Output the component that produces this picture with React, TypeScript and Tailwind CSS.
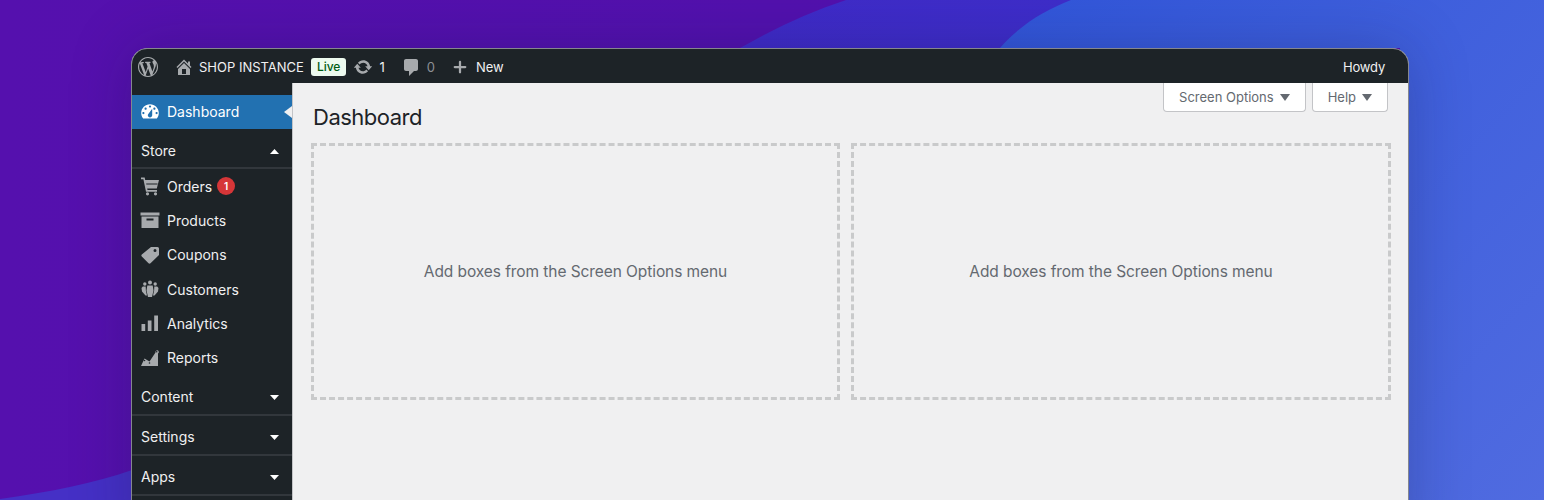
import { Plus } from "lucide-react";

const Caret = ({ up, className }: { up?: boolean; className: string }) => (
    <svg viewBox="0 0 10 6" preserveAspectRatio="none" className={className} aria-hidden="true">
        <path d={up ? "M5 0l5 6H0z" : "M0 0h10L5 6z"} fill="currentColor" />
    </svg>
);

const WpLogo = () => (
    <svg viewBox="0 0 20 20" className="w-[20px] h-[20px] text-[#a7aaad]" fill="currentColor">
        <path d="M20 10c0-5.510-4.490-10-10-10C4.480 0 0 4.490 0 10c0 5.520 4.480 10 10 10 5.510 0 10-4.480 10-10zM7.780 15.370L4.370 6.220c.55-.02 1.170-.08 1.170-.08.50-.06.44-1.130-.06-1.110 0 0-1.450.11-2.370.11-.18 0-.37 0-.58-.01C4.120 2.690 6.890 1.050 10 1.050c2.340 0 4.450.90 6.040 2.360-.67-.10-1.620.39-1.620 1.530 0 .71.43 1.310.87 2.030.35.61.55 1.360.55 2.460 0 1.490-1.400 5-1.400 5l-3.030-8.370c.54-.02.82-.17.82-.17.50-.05.44-1.250-.06-1.220 0 0-1.440.12-2.380.12-.87 0-2.330-.12-2.330-.12-.50-.03-.56 1.200-.06 1.220l.92.08 1.260 3.410zM17.410 10c.24-.64.74-1.870.43-4.250.70 1.290 1.050 2.710 1.050 4.250 0 3.290-1.730 6.240-4.480 7.820.50-1.330 1-2.670 1.500-4.010zM6.100 18.090C3.120 16.650 1.110 13.530 1.110 10c0-1.300.23-2.480.72-3.590C3.250 10.300 4.670 14.200 6.100 18.090zm4.030-6.630l2.580 6.980c-.85.310-1.780.47-2.710.47-.78 0-1.570-.11-2.290-.32 .82-2.380 1.620-4.750 2.420-7.130z" />
    </svg>
);

const HomeIcon = () => (
    <svg viewBox="0 0 20 20" className="w-[20px] h-[20px] text-[#a7aaad]" fill="currentColor">
        <path d="M16 8.500l1.530 1.530-1.060 1.060L10 4.620l-6.470 6.470-1.060-1.060L10 2.500l4 4v-2h2v4zm-6-2.460l6 5.990V18H4v-5.970zM12 17v-5H8v5h4z" />
    </svg>
);

const UpdateIcon = () => (
    <svg viewBox="0 0 20 20" className="w-[20px] h-[20px] text-[#a7aaad]" fill="currentColor">
        <path d="M10.200 3.280c3.530 0 6.430 2.610 6.920 6h2.080l-3.500 4-3.500-4h2.320c-.45-1.970-2.210-3.450-4.320-3.450-1.450 0-2.730.71-3.540 1.780L4.950 5.660C6.230 4.200 8.110 3.280 10.200 3.280zm-.400 13.440c-3.520 0-6.430-2.610-6.920-6H.800l3.500-4c1.170 1.330 2.330 2.670 3.500 4H5.480c.45 1.970 2.210 3.450 4.320 3.450 1.450 0 2.730-.71 3.540-1.780l1.710 1.950c-1.280 1.460-3.150 2.380-5.250 2.380z" />
    </svg>
);

const CommentIcon = () => (
    <svg viewBox="0 0 20 20" className="w-[20px] h-[20px] text-[#a7aaad]" fill="currentColor">
        <path d="M5 2h10c1.100 0 2 .9 2 2v8c0 1.100-.9 2-2 2h-2l-5 5v-5H5c-1.100 0-2-.9-2-2V4c0-1.100.9-2 2-2z" />
    </svg>
);

const DashIcon = () => (
    <svg viewBox="0 0 20 20" className="w-[22px] h-[22px] text-white" fill="currentColor">
        <path d="M3.760 16h12.480c1.100-1.430 1.760-3.140 1.760-5 0-4.420-3.580-8-8-8s-8 3.580-8 8c0 1.860.66 3.570 1.760 5zM10 4c.55 0 1 .45 1 1s-.45 1-1 1-1-.45-1-1 .45-1 1-1zM6 6c.55 0 1 .45 1 1s-.45 1-1 1-1-.45-1-1 .45-1 1-1zm8 0c.55 0 1 .45 1 1s-.45 1-1 1-1-.45-1-1 .45-1 1-1zm-5.370 5.550L12 7v6c0 1.100-.9 2-2 2s-2-.9-2-2c0-.57.24-1.080.63-1.450zM4 10c.55 0 1 .45 1 1s-.45 1-1 1-1-.45-1-1 .45-1 1-1zm12 0c.55 0 1 .45 1 1s-.45 1-1 1-1-.45-1-1 .45-1 1-1z" />
    </svg>
);

const icons: Record<string, React.ReactNode> = {
    Orders: (
        <path
            fillRule="evenodd"
            d="M1 1.500h3.700L5.200 4H19l-2.200 8.500H7.200l.3 1.500H17v1.700H6L3.400 3.200H1zM6.200 7.600l.1.800h11.100l.2-.8zM7.500 16.200a1.600 1.600 0 1 1 0 3.200 1.600 1.600 0 0 1 0-3.200zm8 0a1.600 1.600 0 1 1 0 3.200 1.600 1.600 0 0 1 0-3.200z"
        />
    ),
    Products: (
        <path
            fillRule="evenodd"
            d="M.5 2.500h19v3H.5zM1.500 6.500h17v11.500h-17zM6.500 8.500v2h7v-2z"
        />
    ),
    Coupons: (
        <path
            fillRule="evenodd"
            d="M11 2h6.500A1.500 1.500 0 0 1 19 3.500V10l-8.500 8.200a1.500 1.500 0 0 1-2 0l-6.700-6.700a1.500 1.500 0 0 1 0-2zM15 4a1.500 1.500 0 1 0 0 3 1.500 1.500 0 0 0 0-3z"
        />
    ),
    Customers: (
        <>
            <circle cx="10" cy="3.600" r="2" />
            <circle cx="4.800" cy="5" r="1.700" />
            <circle cx="15.200" cy="5" r="1.700" />
            <path d="M7.300 6.500h5.400l.8 5-1.500 6.500H8l-1.500-6.500zM2.800 7.500h2.900l.2 4.200 1.100 4.800H5.500L2 12.500 1.500 9zM17.200 7.500h-2.900l-.2 4.200-1.100 4.800h1.500l3.500-4L18.500 9z" />
        </>
    ),
    Analytics: <path d="M1.500 11h3.700v7H1.500zM7.800 7.500h3.700V18H7.800zM14.200 2.500H18V18h-3.800z" />,
    Reports: (
        <>
            <path d="M1 18l3.500-7.500 5 3L15.500 4.500a1.700 1.700 0 1 1 2.500 1V18z" />
            <circle cx="4.500" cy="12.500" r=".8" fill="#1d2327" />
            <circle cx="9.500" cy="15" r=".8" fill="#1d2327" />
            <circle cx="16.700" cy="3.800" r=".8" fill="#1d2327" />
        </>
    ),
};

const Icon = ({ name }: { name: string }) => (
    <svg viewBox="0 0 20 20" className="w-[20px] h-[20px] text-[#a7aaad]" fill="currentColor" aria-hidden="true">
        {icons[name]}
    </svg>
);

const storeItems = ["Orders", "Products", "Coupons", "Customers", "Analytics", "Reports"];

const Group = ({ label, up }: { label: string; up?: boolean }) => (
    <div className="flex items-center justify-between h-[40px] pt-[4px] pl-[9px] pr-[13px] border-b-2 border-[#32373c]">
        <span>{label}</span>
        <Caret up={up} className="w-[9px] h-[5px] mt-[2px] text-white" />
    </div>
);

const Drop = ({ className }: { className: string }) => (
    <div
        className={`h-[257px] border-[3px] border-dashed border-[#c9cacb] flex items-center justify-center text-[#646970] text-[15.5px] tracking-[-0.08px] ${className}`}
    >
        Add boxes from the Screen Options menu
    </div>
);

export default function App() {
    return (
        <div className="w-[1544px] h-[500px] overflow-hidden relative bg-[#4e0fa9] font-['Inter','Liberation_Sans',sans-serif] text-[14px]">
            <svg viewBox="0 0 1544 500" className="absolute inset-0 w-full h-full" aria-hidden="true">
                <defs>
                    <linearGradient id="bgA" x1="0" y1="0" x2="1" y2="0">
                        <stop offset="0" stopColor="#5510ae" />
                        <stop offset="1" stopColor="#4f12ae" />
                    </linearGradient>
                    <linearGradient id="bgB" x1="0" y1="0" x2="1" y2="0">
                        <stop offset="0" stopColor="#3f2bc8" />
                        <stop offset="1" stopColor="#3c30cc" />
                    </linearGradient>
                    <linearGradient id="bgC" gradientUnits="userSpaceOnUse" x1="1000" y1="0" x2="1544" y2="500">
                        <stop offset="0" stopColor="#3156da" />
                        <stop offset="1" stopColor="#506be0" />
                    </linearGradient>
                </defs>
                <rect width="1544" height="500" fill="url(#bgA)" />
                <path d="M740 48C775 28 810 12 846 0H1544V500H1400V48z" fill="url(#bgB)" />
                <path d="M1000 48C1020 25 1045 10 1071 0H1544V500H1400V48z" fill="url(#bgC)" />
                <path d="M0 499C50 492 95 483 132 470V500H0z" fill="#4530c6" />
            </svg>
            <div className="relative mx-[131px] mt-[48px] h-[500px] w-[1278px] rounded-t-[16px] overflow-hidden border border-[#85878f] bg-[#f0f0f1] flex flex-col shadow-[0_0_60px_rgba(20,20,60,0.25)]">
                <header className="h-[34px] shrink-0 bg-[#1d2327] flex items-center text-[#f0f0f1] text-[13px] pt-[2px] pl-[6px] pr-[23px]">
                    <WpLogo />
                    <div className="ml-[16px]"><HomeIcon /></div>
                    <span className="ml-[5px] pt-[2px]">SHOP INSTANCE</span>
                    <span className="ml-[7px] h-[18px] px-[6px] rounded-[3px] bg-[#edfaef] text-[#005c12] text-[12px] font-medium flex items-center">Live</span>
                    <div className="ml-[7px]"><UpdateIcon /></div>
                    <span className="ml-[6px] pt-[2px]">1</span>
                    <div className="ml-[16px]"><CommentIcon /></div>
                    <span className="ml-[6px] pt-[2px] text-[#8c8f94]">0</span>
                    <Plus className="ml-[16px] w-[18px] h-[18px] text-[#a7aaad]" strokeWidth={3} />
                    <span className="ml-[7px] pt-[2px]">New</span>
                    <span className="ml-auto pt-[2px] tracking-[-0.2px]">Howdy</span>
                </header>
                <div className="flex flex-1 min-h-0">
                    <aside className="w-[160px] shrink-0 bg-[#1d2327] text-[#f0f0f1] pt-[12px]">
                        <div className="relative h-[34px] pb-[1px] bg-[#2271b1] flex items-center pl-[7px] text-white">
                            <DashIcon />
                            <span className="ml-[6px]">Dashboard</span>
                            <span className="absolute right-0 top-[11px] border-y-[6px] border-y-transparent border-r-[8px] border-r-[#f0f0f1]" />
                        </div>
                        <Group label="Store" up />
                        <ul>
                            {storeItems.map((name) => (
                                <li key={name} className="h-[34.3px] flex items-center pl-[8px]">
                                    <Icon name={name} />
                                    <span className="ml-[7px]">{name}</span>
                                    {name === "Orders" && (
                                        <span className="ml-[5px] w-[18px] h-[18px] rounded-full bg-[#d63638] text-white text-[10px] font-semibold flex items-center justify-center">1</span>
                                    )}
                                </li>
                            ))}
                        </ul>
                        <div className="mt-[1px]"><Group label="Content" /></div>
                        <Group label="Settings" />
                        <Group label="Apps" />
                    </aside>
                    <main className="flex-1 relative border-l border-[#c3c4c7]">
                        <div className="absolute right-[20px] top-0 flex gap-[6px] text-[13px] text-[#646970]">
                            <div className="h-[29px] pt-[1px] px-[15px] bg-white border border-t-0 border-[#c3c4c7] rounded-b-[4px] flex items-center gap-[6px]">
                                Screen Options <Caret className="w-[10px] h-[7px] text-[#646970]" />
                            </div>
                            <div className="h-[29px] pt-[1px] px-[15px] bg-white border border-t-0 border-[#c3c4c7] rounded-b-[4px] flex items-center gap-[6px]">
                                Help <Caret className="w-[10px] h-[7px] text-[#646970]" />
                            </div>
                        </div>
                        <h1 className="pl-[20px] pt-[20px] text-[22px] tracking-[-0.5px] leading-[29px] text-[#1d2327]">Dashboard</h1>
                        <div className="flex gap-[11px] pl-[18px] pr-[17px] mt-[11px]">
                            <Drop className="w-[529px]" />
                            <Drop className="flex-1" />
                        </div>
                    </main>
                </div>
            </div>
        </div>
    );
}
